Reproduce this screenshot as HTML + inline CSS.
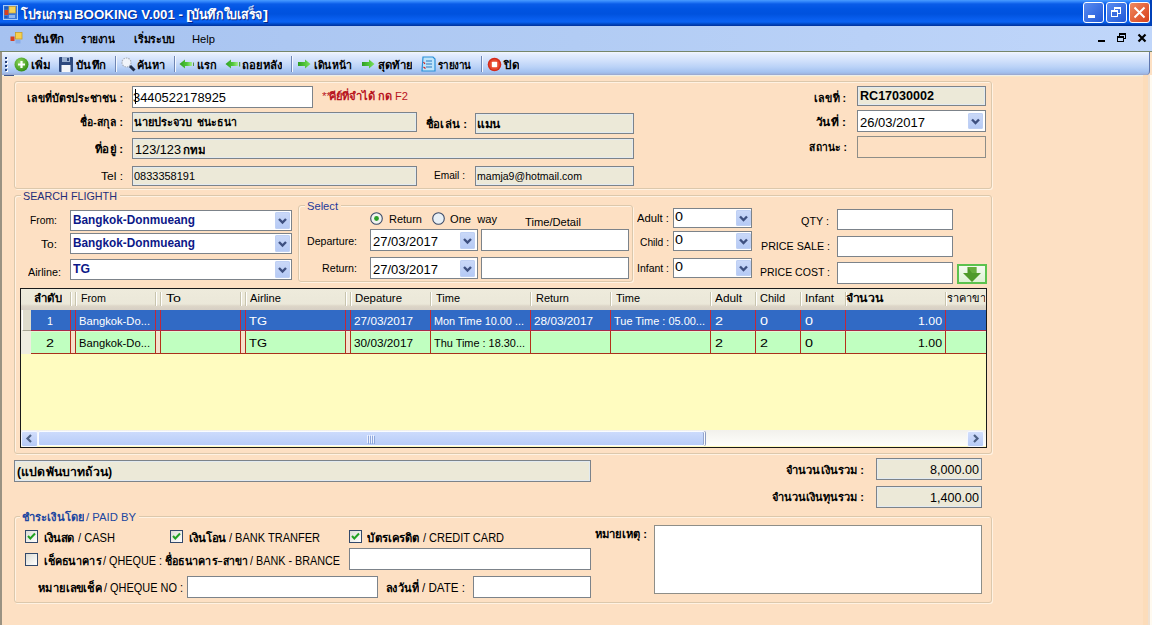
<!DOCTYPE html><html><head><meta charset="utf-8"><title>BOOKING</title><style>
*{margin:0;padding:0;box-sizing:content-box}
html,body{width:1152px;height:625px;overflow:hidden;background:#FDE0C3;font-family:"Liberation Sans",sans-serif;font-size:11px;color:#000;position:relative}
.bx,.t,.grp,.dd,.ic{position:absolute}
.t{white-space:nowrap;transform-origin:0 0}
.grp{border:1px solid #DCC8AC;border-radius:3px;box-shadow:inset 1px 1px 0 #FFF2E2,1px 1px 0 #FFF2E2}
.dd{background:linear-gradient(#CBD9F8,#B4C9F5);border-radius:2px;box-shadow:inset 0 0 0 1px #BFD0F4}
.dd svg{display:block}
</style></head><body>
<div class="bx" style="left:0;top:0;width:1152px;height:26px;background:linear-gradient(#4A9CFF 0px,#2A7EF8 2px,#0A5CE8 4px,#0054E2 9px,#0052DE 14px,#085EEE 19px,#0A62F2 22px,#0048C4 24px,#00309A 26px)"></div>
<svg class="ic" style="left:3px;top:5px" width="15" height="15" viewBox="0 0 15 15"><rect x="0.5" y="0.5" width="14" height="14" fill="#3C78D8" stroke="#A8CCF8"/><rect x="1.5" y="1.5" width="4" height="3" fill="#1E5EC0"/><rect x="1.5" y="5" width="4" height="5" fill="#D8401E"/><rect x="6" y="1.5" width="6.5" height="6.5" fill="#F8D458" stroke="#D0A030" stroke-width="0.7"/><rect x="6" y="10" width="6" height="3" fill="#8CB4F0"/><rect x="1.5" y="11" width="3" height="2" fill="#1E5EC0"/></svg>
<div class="t" id="t0" style="left:21px;top:8px;font-size:13px;line-height:14px;color:#fff;font-weight:bold;transform:scaleX(0.7286);text-shadow:1px 1px 0 #0A2A8A"><span>โปรแกรม</span></div>
<div class="t" id="t1" style="left:74px;top:8px;font-size:13px;line-height:14px;color:#fff;font-weight:bold;transform:scaleX(1.0283);text-shadow:1px 1px 0 #0A2A8A"><span>BOOKING V.001 -</span></div>
<div class="t" id="t2" style="left:186px;top:8px;font-size:13px;line-height:14px;color:#fff;font-weight:bold;transform:scaleX(1.5000);text-shadow:1px 1px 0 #0A2A8A"><span>[</span></div>
<div class="t" id="t3" style="left:191px;top:8px;font-size:13px;line-height:14px;color:#fff;font-weight:bold;transform:scaleX(0.5538);text-shadow:1px 1px 0 #0A2A8A"><span>บันทึกใบเสร็จ</span></div>
<div class="t" id="t4" style="left:263px;top:8px;font-size:13px;line-height:14px;color:#fff;font-weight:bold;transform:scaleX(1.2500);text-shadow:1px 1px 0 #0A2A8A"><span>]</span></div>
<div class="bx" style="left:1083px;top:2px;width:19px;height:19px;border:1px solid #fff;border-radius:3px;background:linear-gradient(135deg,#5A8CF0,#2058D8)"></div>
<svg class="ic" style="left:1083px;top:2px" width="21" height="21" viewBox="0 0 21 21"><rect x="5" y="13" width="7" height="3" fill="#fff"/></svg>
<div class="bx" style="left:1106px;top:2px;width:19px;height:19px;border:1px solid #fff;border-radius:3px;background:linear-gradient(135deg,#5A8CF0,#2058D8)"></div>
<svg class="ic" style="left:1106px;top:2px" width="21" height="21" viewBox="0 0 21 21"><rect x="8.5" y="5.5" width="6" height="6" fill="none" stroke="#fff" stroke-width="1"/><rect x="8" y="5" width="7" height="2" fill="#fff"/><rect x="5.5" y="8.5" width="6" height="6" fill="#3A6CE0" stroke="#fff" stroke-width="1"/><rect x="5" y="8" width="7" height="2" fill="#fff"/></svg>
<div class="bx" style="left:1129px;top:2px;width:19px;height:19px;border:1px solid #fff;border-radius:3px;background:linear-gradient(135deg,#F08A60,#D8401A)"></div>
<svg class="ic" style="left:1129px;top:2px" width="21" height="21" viewBox="0 0 21 21"><path d="M5.5 5.5 L15.5 15.5 M15.5 5.5 L5.5 15.5" stroke="#fff" stroke-width="2"/></svg>
<div class="bx" style="left:0;top:26px;width:1152px;height:25px;background:linear-gradient(90deg,#A6C2F0,#B2CCF4 50%,#C0D6FA)"></div>
<div class="bx" style="left:0px;top:51px;width:1152px;height:1px;background:#76866A;"></div>
<svg class="ic" style="left:10px;top:32px" width="13" height="12" viewBox="0 0 13 12"><rect x="5.5" y="0.5" width="6.5" height="6.5" fill="#F6D050" stroke="#C8A028" stroke-width="0.8"/><rect x="0.5" y="4.5" width="4" height="4.5" fill="#D84020"/><rect x="5.5" y="8" width="5" height="3.5" fill="#88ACE8"/></svg>
<div class="t" id="t5" style="left:34px;top:32px;font-size:11px;line-height:14px;color:#000;font-weight:bold;transform:scaleX(0.6250);"><span>บันทึก</span></div>
<div class="t" id="t6" style="left:81px;top:32px;font-size:11px;line-height:14px;color:#000;font-weight:bold;transform:scaleX(0.7083);"><span>รายงาน</span></div>
<div class="t" id="t7" style="left:134px;top:32px;font-size:11px;line-height:14px;color:#000;font-weight:bold;transform:scaleX(0.5694);"><span>เริ่มระบบ</span></div>
<div class="t" id="t8" style="left:192px;top:32px;font-size:11px;line-height:14px;color:#000;transform:scaleX(1.0455);"><span>Help</span></div>
<div class="bx" style="left:1098px;top:40px;width:7px;height:2px;background:#000;"></div>
<svg class="ic" style="left:1116px;top:32px" width="11" height="11" viewBox="0 0 11 11"><rect x="3.5" y="1.5" width="6" height="5" fill="none" stroke="#000"/><rect x="3" y="1" width="7" height="2" fill="#000"/><rect x="1.5" y="4.5" width="6" height="5" fill="#C6DAF8" stroke="#000"/><rect x="1" y="4" width="7" height="2" fill="#000"/></svg>
<svg class="ic" style="left:1137px;top:33px" width="10" height="10" viewBox="0 0 10 10"><path d="M1.5 1.5 L8.5 8.5 M8.5 1.5 L1.5 8.5" stroke="#000" stroke-width="2.2"/></svg>
<div class="bx" style="left:2px;top:52px;width:1147px;height:23px;border-right:1px solid #5E76AE;border-radius:0 0 4px 0;background:linear-gradient(#F2F6FE 0,#E2ECFD 3px,#D0E0FB 9px,#BAD2F7 15px,#A4C2F0 20px,#9EB4E0 22px,#98A2C4 23px)"></div>
<div class="bx" style="left:0px;top:52px;width:2px;height:573px;background:#9A9282;"></div>
<div class="bx" style="left:2px;top:75px;width:1146px;height:1px;background:#EEEEEA;"></div>
<div class="bx" style="left:2px;top:76px;width:1146px;height:1px;background:#F8E8C8;"></div>
<div class="bx" style="left:4px;top:75px;width:10px;height:1px;background:#3E5690;"></div>
<div class="bx" style="left:6px;top:58px;width:2px;height:2px;background:#fff;"></div>
<div class="bx" style="left:5px;top:57px;width:2px;height:2px;background:#27417A;"></div>
<div class="bx" style="left:6px;top:62px;width:2px;height:2px;background:#fff;"></div>
<div class="bx" style="left:5px;top:61px;width:2px;height:2px;background:#27417A;"></div>
<div class="bx" style="left:6px;top:66px;width:2px;height:2px;background:#fff;"></div>
<div class="bx" style="left:5px;top:65px;width:2px;height:2px;background:#27417A;"></div>
<div class="bx" style="left:6px;top:70px;width:2px;height:2px;background:#fff;"></div>
<div class="bx" style="left:5px;top:69px;width:2px;height:2px;background:#27417A;"></div>
<svg class="ic" style="left:14px;top:57px" width="15" height="15" viewBox="0 0 15 15"><defs><radialGradient id="gg" cx="0.4" cy="0.35" r="0.7"><stop offset="0" stop-color="#8FD860"/><stop offset="1" stop-color="#2E8A10"/></radialGradient></defs><circle cx="7.5" cy="7.5" r="7" fill="url(#gg)"/><path d="M7.5 4 V11 M4 7.5 H11" stroke="#fff" stroke-width="2.2"/></svg>
<svg class="ic" style="left:59px;top:57px" width="14" height="15" viewBox="0 0 14 15"><rect x="0" y="0" width="14" height="15" fill="#2F4A7E" rx="1"/><rect x="3" y="0" width="8" height="5" fill="#9AB0D0"/><rect x="8" y="1" width="2" height="3" fill="#2F4A7E"/><rect x="2.5" y="8" width="9" height="7" fill="#F4F6FA"/></svg>
<div class="t" id="t9" style="left:31px;top:58px;font-size:11px;line-height:14px;color:#000;font-weight:bold;transform:scaleX(0.4750);"><span>เพิ่ม</span></div>
<div class="t" id="t10" style="left:76px;top:58px;font-size:11px;line-height:14px;color:#000;font-weight:bold;transform:scaleX(0.6250);"><span>บันทึก</span></div>
<svg class="ic" style="left:121px;top:57px" width="15" height="15" viewBox="0 0 15 15"><circle cx="5.5" cy="5.5" r="4.5" fill="#F0F4FA" stroke="#A8B0BC" stroke-width="1.2" stroke-dasharray="1.5 1"/><path d="M9 9 L13.5 13.5" stroke="#1F2A44" stroke-width="3"/></svg>
<div class="t" id="t11" style="left:137px;top:58px;font-size:11px;line-height:14px;color:#000;font-weight:bold;transform:scaleX(0.7000);"><span>ค้นหา</span></div>
<svg class="ic" style="left:179px;top:59px" width="16" height="11" viewBox="0 0 16 11"><defs><linearGradient id="gl" x1="0" x2="1"><stop offset="0" stop-color="#2E9E22"/><stop offset="0.6" stop-color="#52C83A"/><stop offset="1" stop-color="#A6EE8E"/></linearGradient></defs><path d="M13 3 H6 V0.5 L0.5 5 L6 9.5 V7 H13 Z" fill="url(#gl)"/><rect x="14" y="3.5" width="1" height="3.5" fill="#5A8A50"/></svg>
<div class="t" id="t12" style="left:197px;top:58px;font-size:11px;line-height:14px;color:#000;font-weight:bold;transform:scaleX(0.8333);"><span>แรก</span></div>
<svg class="ic" style="left:225px;top:59px" width="16" height="11" viewBox="0 0 16 11"><path d="M13 3 H6 V0.5 L0.5 5 L6 9.5 V7 H13 Z" fill="url(#gl)"/><rect x="14" y="3" width="1.2" height="4.5" fill="#4E9A40"/></svg>
<div class="t" id="t13" style="left:242px;top:58px;font-size:11px;line-height:14px;color:#000;font-weight:bold;transform:scaleX(0.7143);"><span>ถอยหลัง</span></div>
<svg class="ic" style="left:297px;top:59px" width="14" height="11" viewBox="0 0 14 11"><defs><linearGradient id="gr" x1="0" x2="1"><stop offset="0" stop-color="#2E9E22"/><stop offset="0.5" stop-color="#4EC238"/><stop offset="1" stop-color="#7EE060"/></linearGradient></defs><path d="M1 3 H8 V0.5 L13.5 5 L8 9.5 V7 H1 Z" fill="url(#gr)"/></svg>
<div class="t" id="t14" style="left:314px;top:58px;font-size:11px;line-height:14px;color:#000;font-weight:bold;transform:scaleX(0.5938);"><span>เดินหน้า</span></div>
<svg class="ic" style="left:361px;top:59px" width="14" height="11" viewBox="0 0 14 11"><path d="M1 3 H8 V0.5 L13.5 5 L8 9.5 V7 H1 Z" fill="url(#gr)"/></svg>
<div class="t" id="t15" style="left:378px;top:58px;font-size:11px;line-height:14px;color:#000;font-weight:bold;transform:scaleX(0.6071);"><span>สุดท้าย</span></div>
<svg class="ic" style="left:421px;top:56px" width="15" height="17" viewBox="0 0 15 17"><path d="M2 1 H12 L14 3 V15 H1 Z" fill="#BEE4FA" stroke="#2A90D8" stroke-width="1.2"/><path d="M5 5 H11 M5 8 H11 M5 11 H11" stroke="#2A78C0" stroke-width="1"/><path d="M2.5 6 L4 8 M2.5 11 L4.5 12.5" stroke="#D02020" stroke-width="1.2"/></svg>
<div class="t" id="t16" style="left:438px;top:58px;font-size:11px;line-height:14px;color:#000;font-weight:bold;transform:scaleX(0.6875);"><span>รายงาน</span></div>
<svg class="ic" style="left:487px;top:57px" width="15" height="15" viewBox="0 0 15 15"><circle cx="7.5" cy="7.5" r="6.8" fill="#D42C1C"/><circle cx="7.5" cy="7.5" r="5.2" fill="#E84A30"/><rect x="4.8" y="4.8" width="5.4" height="5.4" fill="#fff" rx="0.8"/></svg>
<div class="t" id="t17" style="left:504px;top:58px;font-size:11px;line-height:14px;color:#000;font-weight:bold;transform:scaleX(0.6250);"><span>ปิด</span></div>
<div class="bx" style="left:115px;top:56px;width:1px;height:16px;background:#6F86B4;border-right:1px solid #F4F8FF"></div>
<div class="bx" style="left:174px;top:56px;width:1px;height:16px;background:#6F86B4;border-right:1px solid #F4F8FF"></div>
<div class="bx" style="left:291px;top:56px;width:1px;height:16px;background:#6F86B4;border-right:1px solid #F4F8FF"></div>
<div class="bx" style="left:481px;top:56px;width:1px;height:16px;background:#6F86B4;border-right:1px solid #F4F8FF"></div>
<div class="grp" style="left:14px;top:81px;width:976px;height:106px"></div>
<div class="t" id="t18" style="left:27px;top:91px;font-size:11px;line-height:14px;color:#000;font-weight:bold;transform:scaleX(0.6713);"><span>เลขที่บัตรประชาชน :</span></div>
<div class="bx" style="left:132px;top:86px;width:179px;height:20px;background:#fff;border:1px solid #7C838A;"></div>
<div class="t" id="t19" style="left:133px;top:91px;font-size:12.5px;line-height:14px;color:#000;transform:scaleX(1.0220);"><span>3440522178925</span></div>
<div class="bx" style="left:135px;top:89px;width:1px;height:15px;background:#000;"></div>
<div class="t" id="t20" style="left:322px;top:89px;font-size:11px;line-height:14px;color:#B8141E;transform:scaleX(1.1250);"><span>**</span></div>
<div class="t" id="t21" style="left:329px;top:89px;font-size:11px;line-height:14px;color:#B8141E;font-weight:bold;transform:scaleX(0.4423);"><span>คีย์ที่จำได้</span></div>
<div class="t" id="t22" style="left:378px;top:89px;font-size:11px;line-height:14px;color:#B8141E;font-weight:bold;transform:scaleX(0.8750);"><span>กด</span></div>
<div class="t" id="t23" style="left:395px;top:89px;font-size:11px;line-height:14px;color:#B8141E;transform:scaleX(1.0000);"><span>F2</span></div>
<div class="t" id="t24" style="left:80px;top:115px;font-size:11px;line-height:14px;color:#000;font-weight:bold;transform:scaleX(0.5733);"><span>ชื่อ-สกุล :</span></div>
<div class="bx" style="left:132px;top:112px;width:283px;height:18px;background:#ECE9D8;border:1px solid #7C838A;box-shadow:inset 0 0 0 1px #E2EAF0;"></div>
<div class="t" id="t25" style="left:134px;top:115px;font-size:11px;line-height:14px;color:#000;font-weight:bold;transform:scaleX(0.8056);"><span>นายประจวบ</span></div>
<div class="t" id="t26" style="left:197px;top:115px;font-size:11px;line-height:14px;color:#000;font-weight:bold;transform:scaleX(0.8333);"><span>ชนะธนา</span></div>
<div class="t" id="t27" style="left:426px;top:117px;font-size:11px;line-height:14px;color:#000;font-weight:bold;transform:scaleX(0.5775);"><span>ชื่อเล่น :</span></div>
<div class="bx" style="left:475px;top:113px;width:157px;height:19px;background:#ECE9D8;border:1px solid #7C838A;box-shadow:inset 0 0 0 1px #E2EAF0;"></div>
<div class="t" id="t28" style="left:477px;top:117px;font-size:11px;line-height:14px;color:#000;font-weight:bold;transform:scaleX(1.0000);"><span>แมน</span></div>
<div class="t" id="t29" style="left:95px;top:142px;font-size:11px;line-height:14px;color:#000;font-weight:bold;transform:scaleX(0.4444);"><span>ที่อยู่ :</span></div>
<div class="bx" style="left:132px;top:138px;width:500px;height:19px;background:#ECE9D8;border:1px solid #7C838A;box-shadow:inset 0 0 0 1px #E2EAF0;"></div>
<div class="t" id="t30" style="left:135px;top:143px;font-size:12.5px;line-height:14px;color:#000;transform:scaleX(1.0000);"><span>123/123</span></div>
<div class="t" id="t31" style="left:183px;top:143px;font-size:11px;line-height:14px;color:#000;font-weight:bold;transform:scaleX(0.9167);"><span>กทม</span></div>
<div class="t" id="t32" style="left:101px;top:169px;font-size:11px;line-height:14px;color:#000;transform:scaleX(1.1000);"><span>Tel :</span></div>
<div class="bx" style="left:132px;top:166px;width:283px;height:18px;background:#ECE9D8;border:1px solid #7C838A;box-shadow:inset 0 0 0 1px #E2EAF0;"></div>
<div class="t" id="t33" style="left:134px;top:169px;font-size:11px;line-height:14px;color:#000;transform:scaleX(1.0167);"><span>0833358191</span></div>
<div class="t" id="t34" style="left:434px;top:168px;font-size:11px;line-height:14px;color:#000;transform:scaleX(0.9688);"><span>Email :</span></div>
<div class="bx" style="left:475px;top:166px;width:157px;height:18px;background:#ECE9D8;border:1px solid #7C838A;box-shadow:inset 0 0 0 1px #E2EAF0;"></div>
<div class="t" id="t35" style="left:477px;top:169px;font-size:11px;line-height:14px;color:#000;transform:scaleX(0.9813);"><span>mamja9@hotmail.com</span></div>
<div class="t" id="t36" style="left:814px;top:91px;font-size:11px;line-height:14px;color:#000;font-weight:bold;transform:scaleX(0.5818);"><span>เลขที่ :</span></div>
<div class="bx" style="left:857px;top:86px;width:127px;height:18px;background:#ECE9D8;border:1px solid #7C838A;box-shadow:inset 0 0 0 1px #E2EAF0;"></div>
<div class="t" id="t37" style="left:860px;top:89px;font-size:12.5px;line-height:14px;color:#000;font-weight:bold;transform:scaleX(1.0000);"><span>RC17030002</span></div>
<div class="t" id="t38" style="left:816px;top:115px;font-size:11px;line-height:14px;color:#000;font-weight:bold;transform:scaleX(0.5455);"><span>วันที่ :</span></div>
<div class="bx" style="left:857px;top:110px;width:127px;height:20px;background:#fff;border:1px solid #7C838A;"></div>
<div class="t" id="t39" style="left:860px;top:116px;font-size:12.5px;line-height:14px;color:#000;transform:scaleX(1.0156);"><span>26/03/2017</span></div>
<div class="dd" style="left:968px;top:113px;width:15px;height:16px"><svg width="15" height="16" viewBox="0 0 15 16"><path d="M4.0 6.5 L7.5 10.0 L11.0 6.5" stroke="#3E5080" stroke-width="2.4" fill="none"/></svg></div>
<div class="t" id="t40" style="left:809px;top:140px;font-size:11px;line-height:14px;color:#000;font-weight:bold;transform:scaleX(0.8085);"><span>สถานะ :</span></div>
<div class="bx" style="left:857px;top:136px;width:127px;height:20px;background:transparent;border:1px solid #8E8E88;"></div>
<div class="grp" style="left:14px;top:195px;width:976px;height:257px"></div>
<div class="bx" style="left:21px;top:193px;width:99px;height:5px;background:#FDE0C3;"></div>
<div class="t" id="t41" style="left:23px;top:189px;font-size:11px;line-height:14px;color:#1F2E7A;transform:scaleX(0.9792);"><span>SEARCH FLIGHTH</span></div>
<div class="t" id="t42" style="left:30px;top:213px;font-size:11px;line-height:14px;color:#000;transform:scaleX(0.9310);"><span>From:</span></div>
<div class="t" id="t43" style="left:41px;top:237px;font-size:11px;line-height:14px;color:#000;transform:scaleX(1.0667);"><span>To:</span></div>
<div class="t" id="t44" style="left:28px;top:265px;font-size:11px;line-height:14px;color:#000;transform:scaleX(1.0312);"><span>Airline:</span></div>
<div class="bx" style="left:70px;top:210px;width:220px;height:19px;background:#fff;border:1px solid #7C838A;"></div>
<div class="t" id="t45" style="left:73px;top:213px;font-size:12px;line-height:14px;color:#0C1888;font-weight:bold;transform:scaleX(0.9839);"><span>Bangkok-Donmueang</span></div>
<div class="dd" style="left:275px;top:212px;width:15px;height:17px"><svg width="15" height="17" viewBox="0 0 15 17"><path d="M4.0 7.0 L7.5 10.5 L11.0 7.0" stroke="#3E5080" stroke-width="2.4" fill="none"/></svg></div>
<div class="bx" style="left:70px;top:233px;width:220px;height:19px;background:#fff;border:1px solid #7C838A;"></div>
<div class="t" id="t46" style="left:73px;top:236px;font-size:12px;line-height:14px;color:#0C1888;font-weight:bold;transform:scaleX(0.9839);"><span>Bangkok-Donmueang</span></div>
<div class="dd" style="left:275px;top:235px;width:15px;height:17px"><svg width="15" height="17" viewBox="0 0 15 17"><path d="M4.0 7.0 L7.5 10.5 L11.0 7.0" stroke="#3E5080" stroke-width="2.4" fill="none"/></svg></div>
<div class="bx" style="left:70px;top:259px;width:220px;height:19px;background:#fff;border:1px solid #7C838A;"></div>
<div class="t" id="t47" style="left:73px;top:262px;font-size:12px;line-height:14px;color:#0C1888;font-weight:bold;transform:scaleX(1.0625);"><span>TG</span></div>
<div class="dd" style="left:275px;top:261px;width:15px;height:17px"><svg width="15" height="17" viewBox="0 0 15 17"><path d="M4.0 7.0 L7.5 10.5 L11.0 7.0" stroke="#3E5080" stroke-width="2.4" fill="none"/></svg></div>
<div class="grp" style="left:298px;top:205px;width:333px;height:75px"></div>
<div class="bx" style="left:305px;top:203px;width:36px;height:5px;background:#FDE0C3;"></div>
<div class="t" id="t48" style="left:307px;top:199px;font-size:11px;line-height:14px;color:#1F3A9A;transform:scaleX(1.0333);"><span>Select</span></div>
<svg class="ic" style="left:370px;top:212px" width="13" height="13" viewBox="0 0 13 13"><circle cx="6.5" cy="6.5" r="5.8" fill="#F2F4F0" stroke="#3A4A68" stroke-width="1.1"/><circle cx="6.5" cy="6.5" r="2.4" fill="#2CA028"/></svg>
<div class="t" id="t49" style="left:389px;top:212px;font-size:11px;line-height:14px;color:#000;transform:scaleX(1.0000);"><span>Return</span></div>
<svg class="ic" style="left:432px;top:212px" width="13" height="13" viewBox="0 0 13 13"><circle cx="6.5" cy="6.5" r="5.8" fill="#E8F0F6" stroke="#3A4A68" stroke-width="1.1"/></svg>
<div class="t" id="t50" style="left:450px;top:212px;font-size:11px;line-height:14px;color:#000;transform:scaleX(1.0000);"><span>One&nbsp;&nbsp;way</span></div>
<div class="t" id="t51" style="left:525px;top:215px;font-size:11px;line-height:14px;color:#000;transform:scaleX(1.0370);"><span>Time/Detail</span></div>
<div class="t" id="t52" style="left:307px;top:234px;font-size:11px;line-height:14px;color:#000;transform:scaleX(0.9615);"><span>Departure:</span></div>
<div class="t" id="t53" style="left:322px;top:261px;font-size:11px;line-height:14px;color:#000;transform:scaleX(0.9722);"><span>Return:</span></div>
<div class="bx" style="left:370px;top:229px;width:106px;height:20px;background:#fff;border:1px solid #7C838A;"></div>
<div class="t" id="t54" style="left:373px;top:235px;font-size:12.5px;line-height:14px;color:#000;transform:scaleX(1.0156);"><span>27/03/2017</span></div>
<div class="dd" style="left:460px;top:232px;width:15px;height:17px"><svg width="15" height="17" viewBox="0 0 15 17"><path d="M4.0 7.0 L7.5 10.5 L11.0 7.0" stroke="#3E5080" stroke-width="2.4" fill="none"/></svg></div>
<div class="bx" style="left:481px;top:229px;width:146px;height:20px;background:#fff;border:1px solid #7C838A;"></div>
<div class="bx" style="left:370px;top:257px;width:106px;height:20px;background:#fff;border:1px solid #7C838A;"></div>
<div class="t" id="t55" style="left:373px;top:263px;font-size:12.5px;line-height:14px;color:#000;transform:scaleX(1.0156);"><span>27/03/2017</span></div>
<div class="dd" style="left:460px;top:260px;width:15px;height:17px"><svg width="15" height="17" viewBox="0 0 15 17"><path d="M4.0 7.0 L7.5 10.5 L11.0 7.0" stroke="#3E5080" stroke-width="2.4" fill="none"/></svg></div>
<div class="bx" style="left:481px;top:257px;width:146px;height:20px;background:#fff;border:1px solid #7C838A;"></div>
<div class="t" id="t56" style="left:637px;top:211px;font-size:11px;line-height:14px;color:#000;transform:scaleX(1.0667);"><span>Adult :</span></div>
<div class="t" id="t57" style="left:640px;top:235px;font-size:11px;line-height:14px;color:#000;transform:scaleX(0.9667);"><span>Child :</span></div>
<div class="t" id="t58" style="left:637px;top:261px;font-size:11px;line-height:14px;color:#000;transform:scaleX(0.9697);"><span>Infant :</span></div>
<div class="bx" style="left:673px;top:208px;width:77px;height:18px;background:#fff;border:1px solid #7C838A;"></div>
<div class="t" id="t59" style="left:675px;top:210px;font-size:12px;line-height:14px;color:#000;transform:scaleX(1.1429);"><span>0</span></div>
<div class="dd" style="left:736px;top:210px;width:15px;height:16px"><svg width="15" height="16" viewBox="0 0 15 16"><path d="M4.0 6.5 L7.5 10.0 L11.0 6.5" stroke="#3E5080" stroke-width="2.4" fill="none"/></svg></div>
<div class="bx" style="left:673px;top:231px;width:77px;height:18px;background:#fff;border:1px solid #7C838A;"></div>
<div class="t" id="t60" style="left:675px;top:233px;font-size:12px;line-height:14px;color:#000;transform:scaleX(1.1429);"><span>0</span></div>
<div class="dd" style="left:736px;top:233px;width:15px;height:16px"><svg width="15" height="16" viewBox="0 0 15 16"><path d="M4.0 6.5 L7.5 10.0 L11.0 6.5" stroke="#3E5080" stroke-width="2.4" fill="none"/></svg></div>
<div class="bx" style="left:673px;top:258px;width:77px;height:18px;background:#fff;border:1px solid #7C838A;"></div>
<div class="t" id="t61" style="left:675px;top:260px;font-size:12px;line-height:14px;color:#000;transform:scaleX(1.1429);"><span>0</span></div>
<div class="dd" style="left:736px;top:260px;width:15px;height:16px"><svg width="15" height="16" viewBox="0 0 15 16"><path d="M4.0 6.5 L7.5 10.0 L11.0 6.5" stroke="#3E5080" stroke-width="2.4" fill="none"/></svg></div>
<div class="t" id="t62" style="left:801px;top:214px;font-size:11px;line-height:14px;color:#000;transform:scaleX(0.9655);"><span>QTY :</span></div>
<div class="t" id="t63" style="left:761px;top:239px;font-size:11px;line-height:14px;color:#000;transform:scaleX(1.0000);"><span>PRICE SALE :</span></div>
<div class="t" id="t64" style="left:760px;top:265px;font-size:11px;line-height:14px;color:#000;transform:scaleX(0.9589);"><span>PRICE COST :</span></div>
<div class="bx" style="left:837px;top:209px;width:114px;height:19px;background:#fff;border:1px solid #7C838A;"></div>
<div class="bx" style="left:837px;top:236px;width:114px;height:19px;background:#fff;border:1px solid #7C838A;"></div>
<div class="bx" style="left:837px;top:262px;width:114px;height:20px;background:#fff;border:1px solid #7C838A;"></div>
<div class="bx" style="left:957px;top:264px;width:26px;height:16px;border:2px solid #5CC24E;background:linear-gradient(#F4FBF0,#DDF2D4)"></div>
<svg class="ic" style="left:957px;top:264px" width="30" height="20" viewBox="0 0 30 20"><path d="M10.5 3 H19.5 V9 H24 L15 18 L6 9 H10.5 Z" fill="#4E9A2A"/><path d="M10.5 3 H19.5 V9 H15 Z" fill="#7BC24E" opacity="0.5"/></svg>
<div class="bx" style="left:20px;top:288px;width:965px;height:158px;border:1px solid #1A1A1A;background:#FFFCC0"></div>
<div class="bx" style="left:21px;top:289px;width:965px;height:21px;background:linear-gradient(#EEEBDC 0,#EBE8D9 15px,#DDD6C8 17px,#D6CFC4 21px)"></div>
<div class="bx" style="left:70px;top:292px;width:1px;height:14px;background:#C8C4AE;border-right:1px solid #FFFFFF"></div>
<div class="bx" style="left:75px;top:292px;width:1px;height:14px;background:#C8C4AE;border-right:1px solid #FFFFFF"></div>
<div class="bx" style="left:155px;top:292px;width:1px;height:14px;background:#C8C4AE;border-right:1px solid #FFFFFF"></div>
<div class="bx" style="left:160px;top:292px;width:1px;height:14px;background:#C8C4AE;border-right:1px solid #FFFFFF"></div>
<div class="bx" style="left:240px;top:292px;width:1px;height:14px;background:#C8C4AE;border-right:1px solid #FFFFFF"></div>
<div class="bx" style="left:245px;top:292px;width:1px;height:14px;background:#C8C4AE;border-right:1px solid #FFFFFF"></div>
<div class="bx" style="left:345px;top:292px;width:1px;height:14px;background:#C8C4AE;border-right:1px solid #FFFFFF"></div>
<div class="bx" style="left:350px;top:292px;width:1px;height:14px;background:#C8C4AE;border-right:1px solid #FFFFFF"></div>
<div class="bx" style="left:430px;top:292px;width:1px;height:14px;background:#C8C4AE;border-right:1px solid #FFFFFF"></div>
<div class="bx" style="left:530px;top:292px;width:1px;height:14px;background:#C8C4AE;border-right:1px solid #FFFFFF"></div>
<div class="bx" style="left:610px;top:292px;width:1px;height:14px;background:#C8C4AE;border-right:1px solid #FFFFFF"></div>
<div class="bx" style="left:710px;top:292px;width:1px;height:14px;background:#C8C4AE;border-right:1px solid #FFFFFF"></div>
<div class="bx" style="left:755px;top:292px;width:1px;height:14px;background:#C8C4AE;border-right:1px solid #FFFFFF"></div>
<div class="bx" style="left:800px;top:292px;width:1px;height:14px;background:#C8C4AE;border-right:1px solid #FFFFFF"></div>
<div class="bx" style="left:845px;top:292px;width:1px;height:14px;background:#C8C4AE;border-right:1px solid #FFFFFF"></div>
<div class="bx" style="left:945px;top:292px;width:1px;height:14px;background:#C8C4AE;border-right:1px solid #FFFFFF"></div>
<div class="t" id="t65" style="left:34px;top:291px;font-size:11px;line-height:14px;color:#000;font-weight:bold;transform:scaleX(0.5833);"><span>ลำดับ</span></div>
<div class="t" id="t66" style="left:81px;top:291px;font-size:11px;line-height:14px;color:#000;transform:scaleX(0.9615);"><span>From</span></div>
<div class="t" id="t67" style="left:166px;top:291px;font-size:11px;line-height:14px;color:#000;transform:scaleX(1.2500);"><span>To</span></div>
<div class="t" id="t68" style="left:250px;top:291px;font-size:11px;line-height:14px;color:#000;transform:scaleX(1.0690);"><span>Airline</span></div>
<div class="t" id="t69" style="left:355px;top:291px;font-size:11px;line-height:14px;color:#000;transform:scaleX(1.0444);"><span>Depature</span></div>
<div class="t" id="t70" style="left:436px;top:291px;font-size:11px;line-height:14px;color:#000;transform:scaleX(1.0000);"><span>Time</span></div>
<div class="t" id="t71" style="left:536px;top:291px;font-size:11px;line-height:14px;color:#000;transform:scaleX(1.0000);"><span>Return</span></div>
<div class="t" id="t72" style="left:616px;top:291px;font-size:11px;line-height:14px;color:#000;transform:scaleX(1.0000);"><span>Time</span></div>
<div class="t" id="t73" style="left:715px;top:291px;font-size:11px;line-height:14px;color:#000;transform:scaleX(1.1250);"><span>Adult</span></div>
<div class="t" id="t74" style="left:760px;top:291px;font-size:11px;line-height:14px;color:#000;transform:scaleX(1.0417);"><span>Child</span></div>
<div class="t" id="t75" style="left:805px;top:291px;font-size:11px;line-height:14px;color:#000;transform:scaleX(1.0741);"><span>Infant</span></div>
<div class="t" id="t76" style="left:846px;top:291px;font-size:11px;line-height:14px;color:#000;font-weight:bold;transform:scaleX(0.7917);"><span>จำนวน</span></div>
<div class="bx" style="left:947px;top:289px;width:38px;height:20px;overflow:hidden"><div class="t" style="left:0;top:2px;font-size:11px;line-height:14px">ราคาขาย</div></div>
<div class="bx" style="left:21px;top:310px;width:10px;height:44px;background:#EFEDE0;"></div>
<div class="bx" style="left:22px;top:310px;width:8px;height:20px;background:#DEDCCC;border-right:1px solid #A8A594;border-bottom:1px solid #A8A594;border-left:1px solid #fff"></div>
<div class="bx" style="left:31px;top:310px;width:955px;height:21px;background:#316AC5;"></div>
<div class="bx" style="left:31px;top:330px;width:955px;height:1px;background:#A82848;"></div>
<div class="bx" style="left:31px;top:332px;width:955px;height:22px;background:#C0FFC0;"></div>
<div class="bx" style="left:31px;top:353px;width:955px;height:1px;background:#A8301C;"></div>
<div class="bx" style="left:31px;top:331px;width:955px;height:1px;background:#E4F6D4;"></div>
<div class="bx" style="left:71px;top:332px;width:4px;height:21px;background:#F4E2CC;"></div>
<div class="bx" style="left:156px;top:332px;width:4px;height:21px;background:#F4E2CC;"></div>
<div class="bx" style="left:241px;top:332px;width:4px;height:21px;background:#F4E2CC;"></div>
<div class="bx" style="left:346px;top:332px;width:4px;height:21px;background:#F4E2CC;"></div>
<div class="bx" style="left:70px;top:310px;width:1px;height:21px;background:#C42838;"></div>
<div class="bx" style="left:70px;top:331px;width:1px;height:23px;background:#B4301C;"></div>
<div class="bx" style="left:75px;top:310px;width:1px;height:21px;background:#C42838;"></div>
<div class="bx" style="left:75px;top:331px;width:1px;height:23px;background:#B4301C;"></div>
<div class="bx" style="left:155px;top:310px;width:1px;height:21px;background:#C42838;"></div>
<div class="bx" style="left:155px;top:331px;width:1px;height:23px;background:#B4301C;"></div>
<div class="bx" style="left:160px;top:310px;width:1px;height:21px;background:#C42838;"></div>
<div class="bx" style="left:160px;top:331px;width:1px;height:23px;background:#B4301C;"></div>
<div class="bx" style="left:240px;top:310px;width:1px;height:21px;background:#C42838;"></div>
<div class="bx" style="left:240px;top:331px;width:1px;height:23px;background:#B4301C;"></div>
<div class="bx" style="left:245px;top:310px;width:1px;height:21px;background:#C42838;"></div>
<div class="bx" style="left:245px;top:331px;width:1px;height:23px;background:#B4301C;"></div>
<div class="bx" style="left:345px;top:310px;width:1px;height:21px;background:#C42838;"></div>
<div class="bx" style="left:345px;top:331px;width:1px;height:23px;background:#B4301C;"></div>
<div class="bx" style="left:350px;top:310px;width:1px;height:21px;background:#C42838;"></div>
<div class="bx" style="left:350px;top:331px;width:1px;height:23px;background:#B4301C;"></div>
<div class="bx" style="left:430px;top:310px;width:1px;height:21px;background:#C42838;"></div>
<div class="bx" style="left:430px;top:331px;width:1px;height:23px;background:#B4301C;"></div>
<div class="bx" style="left:530px;top:310px;width:1px;height:21px;background:#C42838;"></div>
<div class="bx" style="left:530px;top:331px;width:1px;height:23px;background:#B4301C;"></div>
<div class="bx" style="left:610px;top:310px;width:1px;height:21px;background:#C42838;"></div>
<div class="bx" style="left:610px;top:331px;width:1px;height:23px;background:#B4301C;"></div>
<div class="bx" style="left:710px;top:310px;width:1px;height:21px;background:#C42838;"></div>
<div class="bx" style="left:710px;top:331px;width:1px;height:23px;background:#B4301C;"></div>
<div class="bx" style="left:755px;top:310px;width:1px;height:21px;background:#C42838;"></div>
<div class="bx" style="left:755px;top:331px;width:1px;height:23px;background:#B4301C;"></div>
<div class="bx" style="left:800px;top:310px;width:1px;height:21px;background:#C42838;"></div>
<div class="bx" style="left:800px;top:331px;width:1px;height:23px;background:#B4301C;"></div>
<div class="bx" style="left:845px;top:310px;width:1px;height:21px;background:#C42838;"></div>
<div class="bx" style="left:845px;top:331px;width:1px;height:23px;background:#B4301C;"></div>
<div class="bx" style="left:945px;top:310px;width:1px;height:21px;background:#C42838;"></div>
<div class="bx" style="left:945px;top:331px;width:1px;height:23px;background:#B4301C;"></div>
<div class="t" id="t77" style="left:47px;top:314px;font-size:11px;line-height:14px;color:#fff;transform:scaleX(1.0000);"><span>1</span></div>
<div class="t" id="t78" style="left:79px;top:314px;font-size:11px;line-height:14px;color:#fff;transform:scaleX(1.0143);"><span>Bangkok-Do...</span></div>
<div class="t" id="t79" style="left:249px;top:314px;font-size:11px;line-height:14px;color:#fff;transform:scaleX(1.1250);"><span>TG</span></div>
<div class="t" id="t80" style="left:354px;top:314px;font-size:11px;line-height:14px;color:#fff;transform:scaleX(1.0926);"><span>27/03/2017</span></div>
<div class="t" id="t81" style="left:434px;top:314px;font-size:11px;line-height:14px;color:#fff;transform:scaleX(1.0000);"><span>Mon Time 10.00 ...</span></div>
<div class="t" id="t82" style="left:534px;top:314px;font-size:11px;line-height:14px;color:#fff;transform:scaleX(1.0926);"><span>28/03/2017</span></div>
<div class="t" id="t83" style="left:614px;top:314px;font-size:11px;line-height:14px;color:#fff;transform:scaleX(1.0000);"><span>Tue Time : 05.00...</span></div>
<div class="t" id="t84" style="left:715px;top:314px;font-size:11px;line-height:14px;color:#fff;transform:scaleX(1.3333);"><span>2</span></div>
<div class="t" id="t85" style="left:760px;top:314px;font-size:11px;line-height:14px;color:#fff;transform:scaleX(1.3333);"><span>0</span></div>
<div class="t" id="t86" style="left:805px;top:314px;font-size:11px;line-height:14px;color:#fff;transform:scaleX(1.3333);"><span>0</span></div>
<div class="t" id="t87" style="left:918px;top:314px;font-size:11px;line-height:14px;color:#fff;transform:scaleX(1.1429);"><span>1.00</span></div>
<div class="t" id="t88" style="left:46px;top:336px;font-size:11px;line-height:14px;color:#000;transform:scaleX(1.3333);"><span>2</span></div>
<div class="t" id="t89" style="left:79px;top:336px;font-size:11px;line-height:14px;color:#000;transform:scaleX(1.0143);"><span>Bangkok-Do...</span></div>
<div class="t" id="t90" style="left:249px;top:336px;font-size:11px;line-height:14px;color:#000;transform:scaleX(1.1250);"><span>TG</span></div>
<div class="t" id="t91" style="left:354px;top:336px;font-size:11px;line-height:14px;color:#000;transform:scaleX(1.0926);"><span>30/03/2017</span></div>
<div class="t" id="t92" style="left:434px;top:336px;font-size:11px;line-height:14px;color:#000;transform:scaleX(1.0000);"><span>Thu Time : 18.30...</span></div>
<div class="t" id="t93" style="left:715px;top:336px;font-size:11px;line-height:14px;color:#000;transform:scaleX(1.3333);"><span>2</span></div>
<div class="t" id="t94" style="left:760px;top:336px;font-size:11px;line-height:14px;color:#000;transform:scaleX(1.3333);"><span>2</span></div>
<div class="t" id="t95" style="left:805px;top:336px;font-size:11px;line-height:14px;color:#000;transform:scaleX(1.3333);"><span>0</span></div>
<div class="t" id="t96" style="left:918px;top:336px;font-size:11px;line-height:14px;color:#000;transform:scaleX(1.1429);"><span>1.00</span></div>
<div class="bx" style="left:21px;top:430px;width:965px;height:16px;background:linear-gradient(#F2F1EC,#FEFEFB)"></div>
<div class="bx" style="left:21px;top:431px;width:15px;height:14px;background:linear-gradient(#D2DEFC,#B6CAF6);border:1px solid #F4F8FF;border-radius:2px"></div>
<svg class="ic" style="left:22px;top:431px" width="15" height="15" viewBox="0 0 15 15"><path d="M9 4 L5.5 7.5 L9 11" stroke="#4D6185" stroke-width="2.2" fill="none"/></svg>
<div class="bx" style="left:38px;top:431px;width:665px;height:13px;background:linear-gradient(#CCDBFC,#B8CCF8);border:1px solid #FAFCFF;border-radius:2px;box-shadow:inset -1px 0 0 #95A6CE, 1px 0 0 #8E9CC0"></div>
<svg class="ic" style="left:366px;top:434px" width="10" height="10" viewBox="0 0 10 10"><path d="M1.5 1 V9 M3.5 1 V9 M5.5 1 V9 M7.5 1 V9" stroke="#EEF2FF" stroke-width="1"/><path d="M2.5 2 V10 M4.5 2 V10 M6.5 2 V10 M8.5 2 V10" stroke="#8FA8DC" stroke-width="1"/></svg>
<div class="bx" style="left:967px;top:431px;width:15px;height:14px;background:linear-gradient(#D2DEFC,#B6CAF6);border:1px solid #F4F8FF;border-radius:2px"></div>
<svg class="ic" style="left:968px;top:431px" width="15" height="15" viewBox="0 0 15 15"><path d="M6 4 L9.5 7.5 L6 11" stroke="#4D6185" stroke-width="2.2" fill="none"/></svg>
<div class="bx" style="left:14px;top:460px;width:575px;height:20px;background:#ECE9D8;border:1px solid #7C838A;box-shadow:inset 0 0 0 1px #E2EAF0;"></div>
<div class="t" id="t97" style="left:17px;top:465px;font-size:12px;line-height:14px;color:#000;font-weight:bold;transform:scaleX(0.7600);"><span>(แปดพันบาทถ้วน)</span></div>
<div class="t" id="t98" style="left:786px;top:463px;font-size:11px;line-height:14px;color:#000;font-weight:bold;transform:scaleX(0.7027);"><span>จำนวนเงินรวม :</span></div>
<div class="bx" style="left:876px;top:458px;width:104px;height:20px;background:#ECE9D8;border:1px solid #7C838A;box-shadow:inset 0 0 0 1px #E2EAF0;"></div>
<div class="t" id="t99" style="left:930px;top:463px;font-size:12px;line-height:14px;color:#000;transform:scaleX(1.0208);"><span>8,000.00</span></div>
<div class="t" id="t100" style="left:772px;top:490px;font-size:11px;line-height:14px;color:#000;font-weight:bold;transform:scaleX(0.6815);"><span>จำนวนเงินทุนรวม :</span></div>
<div class="bx" style="left:876px;top:486px;width:104px;height:20px;background:#ECE9D8;border:1px solid #7C838A;box-shadow:inset 0 0 0 1px #E2EAF0;"></div>
<div class="t" id="t101" style="left:930px;top:491px;font-size:12px;line-height:14px;color:#000;transform:scaleX(1.0208);"><span>1,400.00</span></div>
<div class="grp" style="left:14px;top:516px;width:976px;height:85px"></div>
<div class="bx" style="left:20px;top:514px;width:119px;height:5px;background:#FDE0C3;"></div>
<div class="t" id="t102" style="left:22px;top:510px;font-size:11px;line-height:14px;color:#2046A0;font-weight:bold;transform:scaleX(0.6458);"><span>ชำระเงินโดย</span></div>
<div class="t" id="t103" style="left:86px;top:510px;font-size:11px;line-height:14px;color:#2046A0;transform:scaleX(1.0638);"><span>/ PAID BY</span></div>
<div class="bx" style="left:25px;top:530px;width:11px;height:11px;border:1px solid #33496A;background:linear-gradient(135deg,#DCDCD4,#FFFFFF)"></div>
<svg class="ic" style="left:25px;top:530px" width="13" height="13" viewBox="0 0 13 13"><path d="M3 6 L5.3 8.5 L10 3.5" stroke="#21A121" stroke-width="2" fill="none"/></svg>
<div class="t" id="t104" style="left:44px;top:531px;font-size:12px;line-height:14px;color:#000;font-weight:bold;transform:scaleX(0.5741);"><span>เงินสด</span></div>
<div class="t" id="t105" style="left:78px;top:531px;font-size:12px;line-height:14px;color:#000;transform:scaleX(0.9250);"><span>/ CASH</span></div>
<div class="bx" style="left:170px;top:530px;width:11px;height:11px;border:1px solid #33496A;background:linear-gradient(135deg,#DCDCD4,#FFFFFF)"></div>
<svg class="ic" style="left:170px;top:530px" width="13" height="13" viewBox="0 0 13 13"><path d="M3 6 L5.3 8.5 L10 3.5" stroke="#21A121" stroke-width="2" fill="none"/></svg>
<div class="t" id="t106" style="left:189px;top:531px;font-size:12px;line-height:14px;color:#000;font-weight:bold;transform:scaleX(0.5873);"><span>เงินโอน</span></div>
<div class="t" id="t107" style="left:229px;top:531px;font-size:12px;line-height:14px;color:#000;transform:scaleX(0.9192);"><span>/ BANK TRANFER</span></div>
<div class="bx" style="left:349px;top:530px;width:11px;height:11px;border:1px solid #33496A;background:linear-gradient(135deg,#DCDCD4,#FFFFFF)"></div>
<svg class="ic" style="left:349px;top:530px" width="13" height="13" viewBox="0 0 13 13"><path d="M3 6 L5.3 8.5 L10 3.5" stroke="#21A121" stroke-width="2" fill="none"/></svg>
<div class="t" id="t108" style="left:367px;top:531px;font-size:12px;line-height:14px;color:#000;font-weight:bold;transform:scaleX(0.5889);"><span>บัตรเครดิต</span></div>
<div class="t" id="t109" style="left:423px;top:531px;font-size:12px;line-height:14px;color:#000;transform:scaleX(0.9101);"><span>/ CREDIT CARD</span></div>
<div class="bx" style="left:25px;top:553px;width:11px;height:11px;border:1px solid #33496A;background:linear-gradient(135deg,#DCDCD4,#FFFFFF)"></div>
<div class="t" id="t110" style="left:44px;top:554px;font-size:12px;line-height:14px;color:#000;font-weight:bold;transform:scaleX(0.6333);"><span>เช็คธนาคาร</span></div>
<div class="t" id="t111" style="left:103px;top:554px;font-size:12px;line-height:14px;color:#000;transform:scaleX(0.9219);"><span>/ QHEQUE :</span></div>
<div class="t" id="t112" style="left:165px;top:554px;font-size:12px;line-height:14px;color:#000;font-weight:bold;transform:scaleX(0.5778);"><span>ชื่อธนาคาร</span></div>
<div class="t" id="t113" style="left:217px;top:554px;font-size:12px;line-height:14px;color:#000;transform:scaleX(1.5000);"><span>-</span></div>
<div class="t" id="t114" style="left:223px;top:554px;font-size:12px;line-height:14px;color:#000;font-weight:bold;transform:scaleX(0.6944);"><span>สาขา</span></div>
<div class="t" id="t115" style="left:250px;top:554px;font-size:12px;line-height:14px;color:#000;transform:scaleX(0.9000);"><span>/ BANK - BRANCE</span></div>
<div class="bx" style="left:349px;top:548px;width:240px;height:20px;background:#fff;border:1px solid #7C838A;"></div>
<div class="t" id="t116" style="left:38px;top:581px;font-size:12px;line-height:14px;color:#000;font-weight:bold;transform:scaleX(0.6465);"><span>หมายเลขเช็ค</span></div>
<div class="t" id="t117" style="left:104px;top:581px;font-size:12px;line-height:14px;color:#000;transform:scaleX(0.9294);"><span>/ QHEQUE NO :</span></div>
<div class="bx" style="left:187px;top:576px;width:189px;height:20px;background:#fff;border:1px solid #7C838A;"></div>
<div class="t" id="t118" style="left:386px;top:581px;font-size:12px;line-height:14px;color:#000;font-weight:bold;transform:scaleX(0.4583);"><span>ลงวันที่</span></div>
<div class="t" id="t119" style="left:422px;top:581px;font-size:12px;line-height:14px;color:#000;transform:scaleX(1.0000);"><span>/ DATE :</span></div>
<div class="bx" style="left:473px;top:576px;width:116px;height:20px;background:#fff;border:1px solid #7C838A;"></div>
<div class="t" id="t120" style="left:595px;top:527px;font-size:11px;line-height:14px;color:#000;font-weight:bold;transform:scaleX(0.7324);"><span>หมายเหตุ :</span></div>
<div class="bx" style="left:654px;top:525px;width:326px;height:67px;background:#fff;border:1px solid #8E8E88;"></div>
<div class="bx" style="left:1143px;top:75px;width:5px;height:550px;background:#FCDCBA;"></div>
<div class="bx" style="left:1148px;top:75px;width:2px;height:550px;background:#EEE0D2;"></div>
<div class="bx" style="left:1150px;top:75px;width:2px;height:550px;background:#FFFAF0;"></div>
<div class="bx" style="left:1150px;top:0px;width:2px;height:26px;background:#0040B8;"></div>
<script>(function(){var W={"t0":51,"t1":109,"t2":6,"t3":72,"t4":5,"t5":30,"t6":34,"t7":41,"t8":23,"t9":19,"t10":30,"t11":28,"t12":20,"t13":40,"t14":38,"t15":34,"t16":33,"t17":15,"t18":96,"t19":93,"t20":9,"t21":46,"t22":14,"t23":13,"t24":43,"t25":58,"t26":40,"t27":41,"t28":24,"t29":28,"t30":46,"t31":22,"t32":22,"t33":61,"t34":31,"t35":105,"t36":32,"t37":74,"t38":30,"t39":65,"t40":38,"t41":94,"t42":27,"t43":16,"t44":33,"t45":122,"t46":122,"t47":17,"t48":31,"t49":33,"t50":47,"t51":56,"t52":50,"t53":35,"t54":65,"t55":65,"t56":32,"t57":29,"t58":32,"t59":8,"t60":8,"t61":8,"t62":28,"t63":69,"t64":70,"t65":28,"t66":25,"t67":15,"t68":31,"t69":47,"t70":24,"t71":33,"t72":24,"t73":27,"t74":25,"t75":29,"t76":38,"t77":6,"t78":71,"t79":18,"t80":59,"t81":90,"t82":59,"t83":91,"t84":8,"t85":8,"t86":8,"t87":24,"t88":8,"t89":71,"t90":18,"t91":59,"t92":91,"t93":8,"t94":8,"t95":8,"t96":24,"t97":95,"t98":78,"t99":49,"t100":92,"t101":49,"t102":62,"t103":50,"t104":31,"t105":37,"t106":37,"t107":91,"t108":53,"t109":81,"t110":57,"t111":59,"t112":52,"t113":6,"t114":25,"t115":90,"t116":64,"t117":79,"t118":33,"t119":43,"t120":52};for(var k in W){var e=document.getElementById(k);if(!e)continue;var sp=e.firstChild;e.style.transform="none";var w=sp.getBoundingClientRect().width;if(w>0)e.style.transform="scaleX("+(W[k]/w)+")";}})();</script>
</body></html>
